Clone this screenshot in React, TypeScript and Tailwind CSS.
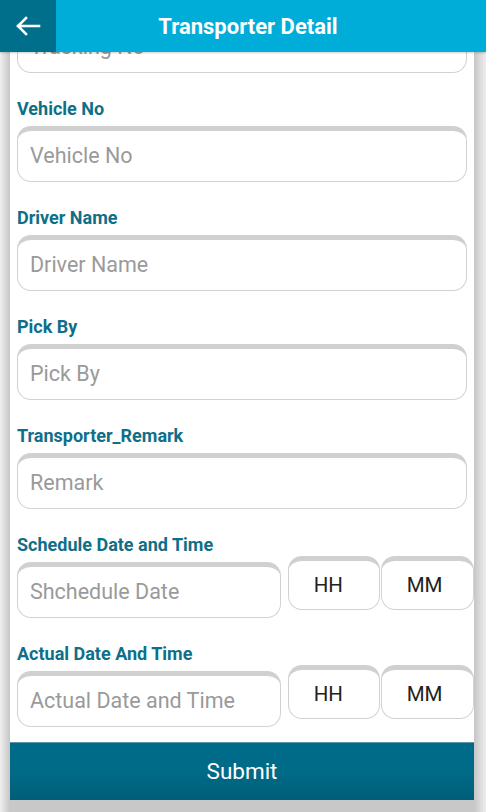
import React from "react";

function ArrowLeft() {
  return (
    <svg width="26" height="20" viewBox="0 0 26 20" fill="none">
      <path d="M24 10H3M11 2L3 10l8 8" stroke="white" strokeWidth="2.6" strokeLinecap="square" strokeLinejoin="miter" />
    </svg>
  );
}

const box = "rounded-[14px] border border-[#d2d2d2] border-t-[5px] border-t-[#d0d0d0]";

function Field({ label, placeholder }: { label: string; placeholder: string }) {
  return (
    <div className="flex flex-col pt-[26px]">
      <div className="h-[20px] leading-[20px] text-[18px] font-bold text-[#0f6f88]">{label}</div>
      <div className={`mt-[7px] h-[56px] ${box} flex items-center pl-[12px] text-[21.5px] text-[#9a9a9a]`}>
        {placeholder}
      </div>
    </div>
  );
}

function DateRow({ label, placeholder }: { label: string; placeholder: string }) {
  return (
    <div className="flex flex-col pt-[26px]">
      <div className="h-[20px] leading-[20px] text-[18px] font-bold text-[#0f6f88]">{label}</div>
      <div className="mt-[1px] flex items-start mr-[-7px]">
        <div className={`mt-[6px] w-[265px] h-[56px] ${box} flex items-center pl-[12px] text-[21.5px] text-[#9a9a9a]`}>
          {placeholder}
        </div>
        <div className={`ml-[7px] w-[92px] h-[54px] ${box} flex items-center justify-center pr-[12px] text-[20.5px] text-[#222]`}>
          HH
        </div>
        <div className={`ml-[1px] w-[93px] h-[54px] ${box} flex items-center justify-center pr-[6px] text-[20.5px] text-[#222]`}>
          MM
        </div>
      </div>
    </div>
  );
}

export default function App() {
  return (
    <div className="w-[486px] h-[812px] overflow-hidden flex flex-col bg-[#c9c9c9]" style={{ fontFamily: "Roboto, 'Noto Sans', sans-serif" }}>
      <div className="h-[52px] flex bg-[#00acd8] shrink-0 shadow-[0_1px_2px_rgba(0,0,0,0.2)] z-10">
        <div className="w-[56px] bg-[#006f8b] flex items-center justify-center">
          <ArrowLeft />
        </div>
        <div className="flex-1 flex items-center justify-center pr-[46px] text-white font-bold text-[22px]">
          Transporter Detail
        </div>
      </div>
      <div className="flex-1 flex">
        <div className="w-[10px] bg-gradient-to-r from-[#f0f0f0] to-[#c6c6c6]" />
        <div className="w-[464px] bg-white flex flex-col">
          <div className="px-[7px] flex flex-col">
            <div className="h-[21px] overflow-hidden">
              <div className={`-mt-[35px] h-[56px] ${box} flex items-center pl-[12px] text-[21.5px] text-[#9a9a9a]`}>
                Tracking No
              </div>
            </div>
            <Field label="Vehicle No" placeholder="Vehicle No" />
            <Field label="Driver Name" placeholder="Driver Name" />
            <Field label="Pick By" placeholder="Pick By" />
            <Field label="Transporter_Remark" placeholder="Remark" />
            <DateRow label="Schedule Date and Time" placeholder="Shchedule Date" />
            <DateRow label="Actual Date And Time" placeholder="Actual Date and Time" />
          </div>
          <div className="h-[15px]" />
          <div className="h-[58px] shrink-0 bg-gradient-to-b from-[#006b88] via-[#006b88] to-[#005e78] border-t border-[#5b97a8] flex items-center justify-center text-white text-[22.5px]">
            Submit
          </div>
          <div className="flex-1 bg-[#c8c8c8]" />
        </div>
        <div className="w-[12px] bg-gradient-to-r from-[#c6c6c6] to-[#eeeeee]" />
      </div>
    </div>
  );
}
